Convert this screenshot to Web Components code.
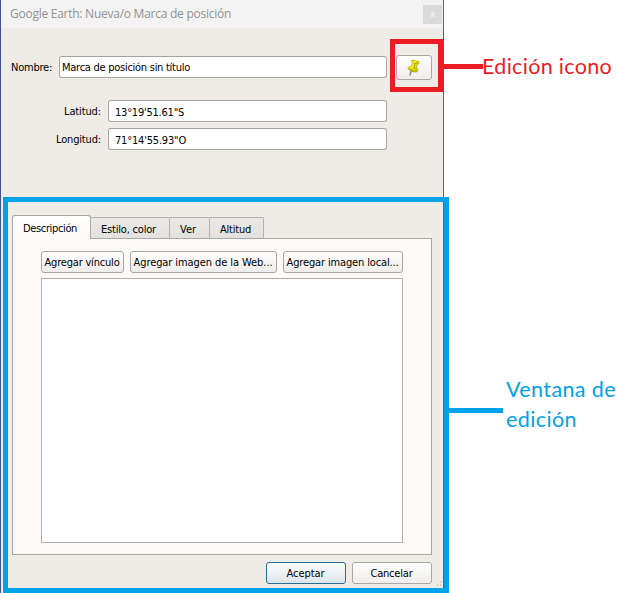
<!DOCTYPE html>
<html lang="es"><head><meta charset="utf-8"><title>Google Earth</title>
<style>
html,body{margin:0;width:634px;height:593px;overflow:hidden;background:#fff}
body{position:relative;font:11px/14px "DejaVu Sans Condensed","DejaVu Sans",sans-serif;color:#000}
</style></head><body>
<placemark-page></placemark-page>
<script>
const define=(name,html,after)=>customElements.define(name,class extends HTMLElement{
  connectedCallback(){ if(this.shadowRoot)return;
    const t=document.createElement('template');t.innerHTML=html;
    this.attachShadow({mode:'open'}).append(t.content.cloneNode(true)); if(after)after(this); }
});
// Text whose tracking adapts to the width given in "w"
define('fit-text',`<style>:host{display:block;white-space:nowrap;flex:none}span{display:inline-block;white-space:pre}</style><span><slot></slot></span>`,el=>{
  const s=el.shadowRoot.querySelector('span'),w=+el.getAttribute('w');
  el.style.width=w+'px';
  s.style.letterSpacing=((w-s.getBoundingClientRect().width)/el.textContent.length)+'px';
});
define('text-field',`<style>:host{display:flex;box-sizing:border-box;height:22px;align-items:center;padding:2px 0 0 var(--pad,6px);border:1px solid #aaa6a2;border-top-color:#a29f9c;border-radius:3px;background:#fff}</style><slot></slot>`);
define('push-button',`<style>:host{display:flex;box-sizing:border-box;height:22px;align-items:center;justify-content:center;padding:1px 1px 0 0;border:1px solid #aaa7a4;border-radius:3px;background:linear-gradient(#fefefe,#efedeb)}:host([primary]){border-color:#256f9f;background:linear-gradient(#fdfefe,#dde5e9)}</style><slot></slot>`);
define('tab-item',`<style>:host{display:flex;box-sizing:border-box;height:21px;align-items:center;padding:3px 0 0 10px;border:1px solid #b5b2af;border-left-width:0;border-bottom:0;border-radius:0 2px 0 0;background:linear-gradient(#e9e8e5,#e3e2df)}
:host([active]){height:24px;margin-bottom:-1px;padding-top:2px;position:relative;border-left-width:1px;border-radius:3px 3px 0 0;background:linear-gradient(#fff,#fdf9f6);border-color:#aaa7a4}</style><slot></slot>`);
define('title-bar',`<style>:host{display:flex;box-sizing:border-box;height:28px;padding:0 1px 0 9px;background:#f3f3f3;color:#929292;justify-content:space-between}
fit-text{font:12px/27px "Open Sans","Noto Sans",sans-serif}
i{display:grid;place-items:center;width:19px;height:19px;margin-top:5px;background:#dadada;color:#efefef;font:bold 8px/12px "DejaVu Sans",sans-serif}</style><fit-text w="221">Google Earth: Nueva/o Marca de posición</fit-text><i>x</i>`);
define('push-pin',`<style>:host{display:block;width:16px;height:18px}svg{display:block}</style>
<svg width="16" height="18" viewBox="0 0 16 18"><path d="M5.6 11 3.8 16.5" stroke="#8d8d8d" stroke-width="1.5"/><path d="M6 1 13 2.6 13 4.6 11.1 5.4 10.6 8.6 12 10.8 11.3 12.8 7.8 13 3.5 11.3 2 9.4 2.3 8.3 5 7.6 6.8 4.2 5.5 2.7Z" fill="#e9e000" stroke="#9b9500" stroke-width=".6"/><path d="M11 4.6 9 4.2 8 9 10.8 10M3 9.8 8 11.9 11.2 11.7" stroke="#aaa400" fill="none"/><path d="M7 2.2 10 3M7.6 4.5 6.3 8 4 9" stroke="#fff83c" fill="none"/></svg>`);
define('edit-panel',`<style>:host{display:block;padding:0 11px}
nav{display:flex;align-items:flex-end;height:23px;position:relative;z-index:1}
section{box-sizing:border-box;width:420px;height:317px;padding:12px 0 0 28px;border:1px solid #aaa7a4;background:#fdf9f6}
.b{display:flex;gap:6px;height:27px}.area{box-sizing:border-box;width:362px;height:265px;background:#fff;border:1px solid #b0adaa}</style>
<nav><tab-item active style="width:79px"><fit-text w="54">Descripción</fit-text></tab-item><tab-item style="width:79px"><fit-text w="55">Estilo, color</fit-text></tab-item><tab-item style="width:40px"><fit-text w="16">Ver</fit-text></tab-item><tab-item style="width:54px"><fit-text w="31">Altitud</fit-text></tab-item></nav>
<section><div class="b"><push-button style="width:83px"><fit-text w="75">Agregar vínculo</fit-text></push-button><push-button style="width:147px"><fit-text w="139">Agregar imagen de la Web...</fit-text></push-button><push-button style="width:120px"><fit-text w="112">Agregar imagen local...</fit-text></push-button></div><div class="area"></div></section>`);
define('placemark-dialog',`<style>:host{display:block;box-sizing:border-box;width:444px;height:593px;border-left:1px solid #42538a;border-right:1px solid #59645b;background:#efebe7}
.n{display:flex;height:26px;align-items:center;padding:26px 0 0 10px}.n>fit-text{padding-top:2px}.n text-field{width:328px;margin-left:7px;--pad:2px}.n push-button{width:36px;height:25px;margin-left:9px}
.c{display:grid;grid-template-columns:100px 279px;column-gap:7px;row-gap:6px;padding-top:20px;height:115px;box-sizing:border-box;align-content:start;align-items:center}.c>fit-text{justify-self:end;padding-top:1px}.c text-field{padding-top:3px}
footer{display:flex;justify-content:flex-end;gap:6px;padding:7px 11px 0 0}footer push-button{width:80px}</style>
<title-bar></title-bar>
<div class="n"><fit-text w="41">Nombre:</fit-text><text-field><fit-text w="128">Marca de posición sin título</fit-text></text-field><push-button><push-pin></push-pin></push-button></div>
<div class="c"><fit-text w="37">Latitud:</fit-text><text-field><fit-text w="69">13°19'51.61"S</fit-text></text-field><fit-text w="45">Longitud:</fit-text><text-field><fit-text w="71">71°14'55.93"O</fit-text></text-field></div>
<div style="height:20px"></div><edit-panel></edit-panel>
<footer><push-button primary><fit-text w="38">Aceptar</fit-text></push-button><push-button><fit-text w="42">Cancelar</fit-text></push-button></footer>`);
define('callout-mark',`<style>:host{position:absolute;z-index:2;box-sizing:border-box;border:5px solid var(--c)}</style>`);
define('callout-line',`<style>:host{position:absolute;z-index:2;height:5px;background:var(--c)}</style>`);
define('callout-label',`<style>:host{position:absolute;display:block;color:var(--c);font:21.5px/30px Lato,sans-serif}</style><slot></slot>`);
define('placemark-page',`<style>:host{display:block;position:relative;width:634px;height:593px}.r{--c:#ed1c24}.u{--c:#00a2e8}.g{position:absolute;left:437px;top:581px}</style>
<placemark-dialog></placemark-dialog>
<svg class="g" width="5" height="6"><path d="M3 1h1M3 4h1M0 4h1" stroke="#aaa7a4"/></svg>
<callout-mark class="r" style="left:390px;top:39px;width:53px;height:53px"></callout-mark>
<callout-line class="r" style="left:443px;top:64px;width:40px"></callout-line>
<callout-label class="r" style="left:482px;top:51px"><fit-text w="130">Edición icono</fit-text></callout-label>
<callout-mark class="u" style="left:3px;top:197px;width:446px;height:396px"></callout-mark>
<callout-line class="u" style="left:449px;top:408px;width:54px"></callout-line>
<callout-label class="u" style="left:506px;top:374px"><fit-text w="110">Ventana de</fit-text><fit-text w="71">edición</fit-text></callout-label>`);
</script></body></html>
